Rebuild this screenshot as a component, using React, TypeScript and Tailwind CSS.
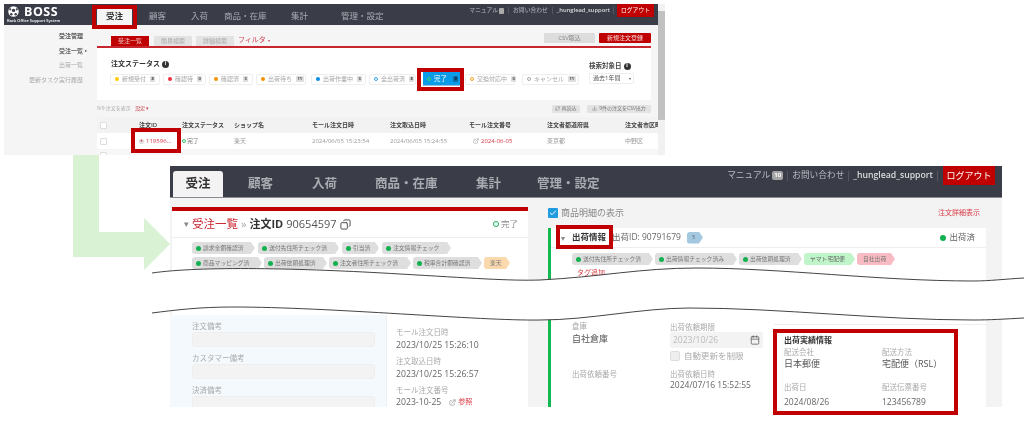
import { Calendar, Check, Copy, Download, ExternalLink, RefreshCw } from "lucide-react";

const RED = "bg-[#c00000]";

type Chip = { label: string; count: string; dot: string; w: string; ml: string };

const chips: Chip[] = [
  { label: "新規受付", count: "8", dot: "bg-[#ffc800]", w: "w-[50px]", ml: "ml-[13px]" },
  { label: "確認待", count: "0", dot: "bg-[#f0303c]", w: "w-[43px]", ml: "ml-[3px]" },
  { label: "確認済", count: "3", dot: "bg-[#f59300]", w: "w-[44px]", ml: "ml-[3px]" },
  { label: "出荷待ち", count: "11", dot: "bg-[#f59300]", w: "w-[50px]", ml: "ml-[3px]" },
  { label: "出荷作業中", count: "3", dot: "bg-[#0a8fe8]", w: "w-[55px]", ml: "ml-[5px]" },
  { label: "全出荷済", count: "8", dot: "border border-[#35a5ea] bg-white", w: "w-[47px]", ml: "ml-[3px]" },
];

const chipsAfter: Chip[] = [
  { label: "交換対応中", count: "0", dot: "border border-[#f5a623] bg-white", w: "w-[50px]", ml: "ml-[5px]" },
  { label: "キャンセル", count: "11", dot: "border border-[#aaa] bg-white", w: "w-[57px]", ml: "ml-[7px]" },
];

const topCols = [
  { label: "注文ステータス", w: "w-[52px]" },
  { label: "ショップ名", w: "w-[78px]" },
  { label: "モール注文日時", w: "w-[78px]" },
  { label: "注文取込日時", w: "w-[79px]" },
  { label: "モール注文番号", w: "w-[78px]" },
  { label: "注文者都道府県", w: "w-[78px]" },
  { label: "注文者市区町", w: "w-[33px]" },
];

function StatusChip({ chip }: { chip: Chip }) {
  return (
    <div className={`flex h-[11px] items-center gap-[3px] rounded-[2px] border border-[#eeeeee] bg-white pl-[4px] text-[6px] text-[#a5a5a5] ${chip.w} ${chip.ml}`}>
      <span className={`h-[4px] w-[4px] shrink-0 rounded-full ${chip.dot}`} />
      <span className="whitespace-nowrap">{chip.label}</span>
      <span className="ml-[1px] rounded-[1px] bg-[#ddd] px-[1.5px] text-[4px] font-bold text-[#444]">{chip.count}</span>
    </div>
  );
}

function BossLogo() {
  return (
    <svg viewBox="0 0 20 20" className="h-[11px] w-[11px]">
      <circle cx="10" cy="10" r="9.5" fill="#fff" />
      <circle cx="10" cy="8" r="3" fill="#3a3c48" />
      <circle cx="4" cy="6" r="2" fill="#3a3c48" />
      <circle cx="16" cy="6" r="2" fill="#3a3c48" />
      <circle cx="6" cy="15" r="2.2" fill="#3a3c48" />
      <circle cx="14" cy="15" r="2.2" fill="#3a3c48" />
    </svg>
  );
}

function TopHeader() {
  return (
    <div className="relative flex h-[21px] items-end bg-[#3a3c48]">
      <div className="flex w-[93px] flex-col pl-[3px] text-white">
        <div className="flex h-[15px] items-center gap-[5px] pl-[1px]">
          <BossLogo />
          <span className="text-[12.5px] leading-[15px] font-bold tracking-[0.5px]">BOSS</span>
        </div>
        <span className="h-[6px] text-[4px] leading-[4px] font-semibold whitespace-nowrap">Back Office Support System</span>
      </div>
      <div className="flex h-[17px] w-[35px] items-center justify-center rounded-t-[2px] bg-[#f5f5f5] text-[8.5px] font-bold text-[#333]">受注</div>
      <div className="flex h-[17px] items-center text-[8.5px] text-[#a9abb1]">
        <span className="ml-[17px] w-[27px]">顧客</span>
        <span className="ml-[15px] w-[27px]">入荷</span>
        <span className="ml-[6px] w-[43px]">商品・在庫</span>
        <span className="ml-[24px] w-[20px]">集計</span>
        <span className="ml-[30px] whitespace-nowrap">管理・設定</span>
      </div>
      <div className="absolute top-0 right-[4px] flex h-[13px] items-center text-[5.8px] text-[#b9bbc0]">
        <span>マニュアル</span>
        <span className="ml-[1px] h-[6px] w-[5px] rounded-[1px] bg-[#aaa]" />
        <span className="mx-[4px] h-[7px] border-l border-[#55575f]" />
        <span>お問い合わせ</span>
        <span className="mx-[4px] h-[7px] border-l border-[#55575f]" />
        <span className="font-semibold text-[#ddd]">_hunglead_support</span>
        <span className="mx-[3px] h-[7px] border-l border-[#55575f]" />
        <span className={`flex h-[13px] w-[37px] items-center justify-center text-white ${RED}`}>ログアウト</span>
      </div>
    </div>
  );
}

function TopSidebar() {
  return (
    <div className="flex w-[93px] flex-col items-end pt-[4px] pr-[14px] text-[6px] leading-[14.6px] text-[#aaa]">
      <span className="font-bold text-[#555]">受注管理</span>
      <span className="font-semibold text-[#666]">受注一覧<span className="absolute ml-[2px] text-[4px]">▸</span></span>
      <span>出荷一覧</span>
      <span className="whitespace-nowrap">更新タスク実行履歴</span>
    </div>
  );
}

function TopMain() {
  return (
    <div className="w-[561px]">
      <div className="flex h-[21px] w-[554px] items-end pl-[14px] text-[6px]">
        <span className={`flex h-[10px] w-[38px] items-center justify-center text-[#f0c0c0] ${RED}`}>受注一覧</span>
        <span className="ml-[5px] flex h-[10px] w-[38px] items-center justify-center bg-[#e3e3e3] text-[#aaa]">簡易検索</span>
        <span className="ml-[4px] flex h-[10px] w-[38px] items-center justify-center bg-[#e3e3e3] text-[#aaa]">詳細検索</span>
        <span className="ml-[4px] text-[7px] leading-[10px] text-[#d04050]">フィルタ <span className="text-[4px]">▾</span></span>
        <span className="mb-[3px] ml-auto flex h-[10px] w-[51px] items-center justify-center rounded-[1px] bg-[#ddd] text-[#888]">CSV取込</span>
        <span className={`mb-[3px] ml-[4px] flex h-[10px] w-[52px] items-center justify-center rounded-[1px] text-[#f5d5d5] ${RED}`}>新規注文登録</span>
      </div>
      <div className="h-[54px] w-[554px] border-t-2 border-[#c8262e] bg-white">
        <div className="flex">
          <div>
            <div className="mt-[11px] ml-[14px] flex h-[10px] items-center gap-[2px] text-[7px] font-bold text-[#333]">
              注文ステータス
              <span className="flex h-[7px] w-[7px] items-center justify-center rounded-full bg-[#333] text-[5px] text-white">i</span>
            </div>
            <div className="mt-[3px] flex items-center">
              {chips.map((chip) => (
                <StatusChip key={chip.label} chip={chip} />
              ))}
              <div className="ml-[7px] flex h-[14px] w-[37px] items-center gap-[3px] border-b border-[#9bd] bg-[#0a9be9] pl-[4px] text-[6.5px] text-white">
                <span className="h-[4px] w-[4px] rounded-full border border-[#3dcf70]" />
                完了
                <span className="ml-[3px] rounded-[1px] bg-[#0a6ea8] px-[1.5px] text-[4px] font-bold text-[#111]">9</span>
              </div>
              {chipsAfter.map((chip) => (
                <StatusChip key={chip.label} chip={chip} />
              ))}
            </div>
          </div>
          <div className="mt-[13px] ml-[10px]">
            <div className="flex h-[10px] items-center gap-[2px] text-[6.5px] font-bold whitespace-nowrap text-[#444]">
              検索対象日
              <span className="flex h-[7px] w-[7px] items-center justify-center rounded-full bg-[#333] text-[5px] text-white">i</span>
            </div>
            <div className="mt-[2px] flex h-[11px] w-[45px] items-center justify-between rounded-[1px] border border-[#eee] pr-[2px] pl-[3px] text-[6px] text-[#555]">
              過去1年間 <span className="text-[4px]">▾</span>
            </div>
          </div>
        </div>
      </div>
      <div className="flex h-[17px] w-[554px] items-center justify-between text-[5px] text-[#aaa]">
        <span>9/9 注文を表示 <span className="ml-[3px] text-[#c8404a]">設定 ▾</span></span>
        <div className="flex items-center gap-[7px]">
          <span className="flex h-[8px] w-[28px] items-center justify-center gap-[1px] rounded-[1px] bg-[#e3e3e3] text-[#777]">
            <RefreshCw size={5} /> 再読込
          </span>
          <span className="flex h-[8px] w-[64px] items-center justify-center gap-[2px] rounded-[1px] bg-[#e3e3e3] text-[#777]">
            <Download size={5} /> 9件の注文をCSV出力
          </span>
        </div>
      </div>
      <div className="flex h-[16px] items-center bg-[#f2f2f2] text-[6px] font-semibold whitespace-nowrap text-[#444]">
        <span className="ml-[3px] h-[7px] w-[7px] rounded-[1px] border border-[#ddd] bg-white" />
        <span className="ml-[32px] w-[43px]">注文ID</span>
        {topCols.map((col) => (
          <span key={col.label} className={col.w}>{col.label}</span>
        ))}
      </div>
      <div className="flex h-[16px] items-center bg-white text-[6px] whitespace-nowrap text-[#999]">
        <span className="ml-[3px] h-[7px] w-[7px] rounded-[1px] border border-[#ddd] bg-white" />
        <span className="ml-[32px] flex w-[43px] items-center gap-[2px] text-[#d83a44]">
          <span className="flex h-[5px] w-[5px] items-center justify-center rounded-full bg-[#ddd] text-[5px] leading-none font-bold">+</span>
          119596...
        </span>
        <span className="flex w-[52px] items-center gap-[1px] text-[#777]">
          <span className="h-[4px] w-[4px] rounded-full border border-[#3dbf70]" />完了
        </span>
        <span className="w-[78px]">楽天</span>
        <span className="w-[78px]">2024/06/05 15:23:54</span>
        <span className="w-[79px]">2024/06/05 15:24:55</span>
        <span className="flex w-[78px] items-center gap-[2px] pl-[4px] text-[#d83a44]">
          <ExternalLink size={6} className="text-[#999]" />2024-06-05
        </span>
        <span className="w-[78px]">東京都</span>
        <span className="w-[33px]">中野区</span>
      </div>
      <div className="mt-[1px] flex h-[5px] items-start overflow-hidden bg-[#f7f7f7]">
        <span className="mt-[2px] ml-[3px] h-[7px] w-[7px] rounded-[1px] border border-[#ddd] bg-white" />
      </div>
    </div>
  );
}

function TopShot() {
  return (
    <div className="absolute top-[4px] left-[4px] flex h-[151px] w-[661px] overflow-hidden bg-[#f5f5f5] blur-[0.4px]">
      <div className="w-[654px]">
        <TopHeader />
        <div className="flex">
          <TopSidebar />
          <TopMain />
        </div>
      </div>
      <div className="relative w-[7px] bg-[#f1f1f1]">
        <div className="mt-[7px] h-[109px] bg-[#c1c1c1]" />
      </div>
    </div>
  );
}

function Tag({ label, w, tone = "done" }: { label: string; w: string; tone?: "done" | "orange" | "green" | "pink" | "blue" }) {
  const tones = {
    done: "bg-[#dedede] text-[#777]",
    orange: "bg-[#fbd9ae] text-[#777] pl-[6px]",
    green: "bg-[#bff5c9] text-[#666] pl-[6px]",
    pink: "bg-[#f9bbc3] text-[#777] pl-[6px]",
    blue: "bg-[#a3c8df] text-[#667] pl-[5px]",
  };
  return (
    <span className={`flex h-[12px] shrink-0 items-center rounded-l-[3px] pl-[4px] text-[5.8px] whitespace-nowrap [clip-path:polygon(0_0,calc(100%-4px)_0,100%_50%,calc(100%-4px)_100%,0_100%)] ${tones[tone]} ${w}`}>
      {tone === "done" && <span className="mr-[2px] h-[5px] w-[5px] shrink-0 rounded-full bg-[#12b050]" />}
      {label}
    </span>
  );
}

function BottomHeader() {
  return (
    <div className="relative flex h-[32px] items-end border-b border-[#888a92] bg-[#3a3c48] pl-[3px]">
      <div className="flex h-[26px] w-[50px] items-center justify-center rounded-t-[3px] bg-[#f3f3f3] text-[12.5px] font-bold text-[#333]">受注</div>
      <div className="flex h-[26px] items-center text-[12.5px] font-semibold text-[#a9abb1]">
        <span className="ml-[25px] w-[25px]">顧客</span>
        <span className="ml-[39px] w-[25px]">入荷</span>
        <span className="ml-[38px] w-[63px]">商品・在庫</span>
        <span className="ml-[38px] w-[25px]">集計</span>
        <span className="ml-[36px] whitespace-nowrap">管理・設定</span>
      </div>
      <div className="absolute top-0 right-[7px] flex h-[19px] items-center text-[8.7px] text-[#b9bbc0]">
        <span>マニュアル</span>
        <span className="ml-[2px] rounded-[2px] bg-[#a5a5a5] px-[2px] text-[6px] leading-[9px] font-bold text-white">10</span>
        <span className="mx-[4px] h-[10px] border-l border-[#55575f]" />
        <span>お問い合わせ</span>
        <span className="mx-[4px] h-[10px] border-l border-[#55575f]" />
        <span className="font-semibold text-[#ddd]">_hunglead_support</span>
        <span className="mx-[4px] h-[10px] border-l border-[#55575f]" />
        <span className={`ml-[1px] flex h-[19px] w-[52px] items-center justify-center text-[9px] text-white ${RED}`}>ログアウト</span>
      </div>
    </div>
  );
}

function OrderColumn() {
  return (
    <div className="w-[378px] pt-[9px]">
      <div className="ml-[2px] h-[108px] w-[356px] border-t-4 border-[#c00000] bg-white">
        <div className="flex h-[27px] items-center border-b border-[#eeeeee] pr-[10px] pl-[12px] text-[11px] whitespace-nowrap">
          <span className="mr-[3px] w-[5px] text-[9px] text-[#888]">▾</span>
          <span className="text-[11.5px] text-[#c8262e]">受注一覧</span>
          <span className="mx-[3px] text-[#aaa]">»</span>
          <span className="font-bold text-[#333]">注文ID</span>
          <span className="ml-[3px] text-[#555]">90654597</span>
          <Copy size={11} className="ml-[3px] -scale-x-100 text-[#444]" />
          <span className="ml-auto flex items-center gap-[2px] text-[8.5px] text-[#888]">
            <span className="h-[6px] w-[6px] rounded-full border border-[#12b050]" />完了
          </span>
        </div>
        <div className="mt-[4px] flex gap-[3px] pl-[20px]">
          <Tag label="請求金額確認済" w="w-[63px]" />
          <Tag label="送付先住所チェック済" w="w-[81px]" />
          <Tag label="引当済" w="w-[37px]" />
          <Tag label="注文情報チェック" w="w-[69px]" />
        </div>
        <div className="mt-[3px] flex gap-[2px] pl-[20px]">
          <Tag label="商品マッピング済" w="w-[70px]" />
          <Tag label="出荷依頼処理済" w="w-[63px]" />
          <Tag label="注文者住所チェック済" w="w-[82px]" />
          <Tag label="税率合計額確認済" w="w-[69px]" />
          <Tag label="楽天" w="w-[26px]" tone="orange" />
        </div>
      </div>
      <div className="flex h-[93px] w-[358px]">
        <div className="w-[216px] bg-[#f4f9fd] pl-[22px] text-[7.5px] leading-[10px] text-[#aaa]">
          <div className="mt-[6px] h-[10px]">注文備考</div>
          <div className="mt-[1px] h-[15px] w-[183px] rounded-[3px] border border-[#eeeeee] bg-[#f3f3f3]" />
          <div className="mt-[6px] h-[10px]">カスタマー備考</div>
          <div className="mt-[1px] h-[15px] w-[183px] rounded-[3px] border border-[#eeeeee] bg-[#f3f3f3]" />
          <div className="mt-[6px] h-[10px]">決済備考</div>
          <div className="mt-[1px] h-[15px] w-[183px] rounded-[3px] border border-[#eeeeee] bg-[#f3f3f3]" />
        </div>
        <div className="flex-1 border-l border-[#eeeeee] bg-white pl-[9px] whitespace-nowrap">
          <div className="mt-[12px] text-[7.5px] leading-[10px] text-[#aaa]">モール注文日時</div>
          <div className="mt-[2px] text-[8.7px] leading-[12px] text-[#666]">2023/10/25 15:26:10</div>
          <div className="mt-[5px] text-[7.5px] leading-[10px] text-[#aaa]">注文取込日時</div>
          <div className="mt-[2px] text-[8.7px] leading-[12px] text-[#666]">2023/10/25 15:26:57</div>
          <div className="mt-[5px] text-[7.5px] leading-[10px] text-[#aaa]">モール注文番号</div>
          <div className="mt-[1px] flex items-center text-[8.7px] leading-[12px] text-[#666]">
            2023-10-25
            <ExternalLink size={7} className="mr-[2px] ml-[8px] text-[#888]" />
            <span className="text-[7px] text-[#d83a44]">参照</span>
          </div>
        </div>
      </div>
    </div>
  );
}

function ShippingResult() {
  return (
    <div className="mt-[4px] ml-[3px] w-[212px] flex-none border-t border-[#eeeeee] text-[7.5px] leading-[10px] text-[#aaa]">
      <div className="pt-[9px] pl-[10px]">
        <div className="text-[8px] leading-[11px] font-bold text-[#333]">出荷実績情報</div>
        <div className="grid grid-cols-[98px_1fr] whitespace-nowrap">
          <span className="mt-[2px]">配送会社</span>
          <span className="mt-[2px]">配送方法</span>
          <span className="mt-[1px] text-[9px] leading-[12px] text-[#555]">日本郵便</span>
          <span className="mt-[1px] text-[9px] leading-[12px] text-[#555]">宅配便（RSL）</span>
          <span className="mt-[12px]">出荷日</span>
          <span className="mt-[12px]">配送伝票番号</span>
          <span className="mt-[4px] text-[8.5px] leading-[12px] text-[#666]">2024/08/26</span>
          <span className="mt-[4px] text-[8.5px] leading-[12px] text-[#666]">123456789</span>
        </div>
      </div>
    </div>
  );
}

function ShippingColumn() {
  return (
    <div className="w-[454px] pr-[16px]">
      <div className="flex h-[30px] items-center justify-between pr-[6px] text-[9px] text-[#888]">
        <div className="flex items-center gap-[3px]">
          <span className="flex h-[10px] w-[10px] items-center justify-center rounded-[1px] bg-[#1f9be0]">
            <Check size={8} strokeWidth={3} className="text-white" />
          </span>
          商品明細の表示
        </div>
        <span className="text-[7px] text-[#d83a44]">注文詳細表示</span>
      </div>
      <div className="h-[179px] border-l-[3px] border-[#12b850] bg-white">
        <div className="flex h-[20px] items-center border-b border-[#eeeeee] pr-[11px] pl-[10px] text-[8.5px] whitespace-nowrap text-[#666]">
          <span className="mr-[6px] w-[5px] text-[8px] text-[#888]">▾</span>
          <span className="font-bold text-[#333]">出荷情報</span>
          <span className="ml-[6px]">出荷ID: 90791679</span>
          <span className="ml-[6px]"><Tag label="5" w="w-[16px]" tone="blue" /></span>
          <span className="ml-auto flex items-center gap-[3px]">
            <span className="h-[6px] w-[6px] rounded-full bg-[#12b050]" />出荷済
          </span>
        </div>
        <div className="mt-[5px] flex gap-[2px] pl-[21px]">
          <Tag label="送付先住所チェック済" w="w-[81px]" />
          <Tag label="出荷情報チェック済み" w="w-[82px]" />
          <Tag label="出荷依頼処理済" w="w-[63px]" />
          <Tag label="ヤマト宅配便" w="w-[51px]" tone="green" />
          <Tag label="自社出荷" w="w-[38px]" tone="pink" />
        </div>
        <div className="mt-[3px] ml-[26px] text-[7px] text-[#d83a44]">タグ追加</div>
        <div className="mt-[41px] flex">
          <div className="flex w-[220px] flex-none pl-[21px] whitespace-nowrap">
            <div className="w-[98px] text-[7.5px] leading-[10px] text-[#aaa]">
              <div className="mt-[1px]">倉庫</div>
              <div className="mt-[1px] text-[9px] leading-[14px] text-[#555]">自社倉庫</div>
              <div className="mt-[23px]">出荷依頼番号</div>
            </div>
            <div className="text-[7.5px] leading-[10px] text-[#aaa]">
              <div className="mt-[2px]">出荷依頼期限</div>
              <div className="flex h-[16px] w-[93px] items-center justify-between rounded-[2px] bg-[#f3f3f3] pr-[3px] pl-[3px] text-[8.5px] text-[#bbb]">
                2023/10/26
                <Calendar size={10} className="text-[#666]" />
              </div>
              <div className="mt-[3px] flex items-center gap-[4px] text-[8.5px]">
                <span className="h-[10px] w-[10px] rounded-[2px] border border-[#ddd] bg-[#eeeeee]" />
                自動更新を制限
              </div>
              <div className="mt-[8px]">出荷依頼日時</div>
              <div className="text-[8.5px] leading-[12px] text-[#666]">2024/07/16 15:52:55</div>
            </div>
          </div>
          <ShippingResult />
        </div>
      </div>
    </div>
  );
}

function BottomShot() {
  return (
    <div className="absolute top-[166px] left-[170px] h-[241px] w-[832px] overflow-hidden bg-[#f3f3f3] blur-[0.3px]">
      <BottomHeader />
      <div className="flex">
        <OrderColumn />
        <ShippingColumn />
      </div>
    </div>
  );
}

function Arrow() {
  return (
    <svg className="absolute top-0 left-0" width="1024" height="427">
      <polygon points="73,155 99,155 99,232 144,232 144,218 170,244 144,270 144,257 73,257" fill="#d8f2d3" />
    </svg>
  );
}

function TornBand() {
  return (
    <svg className="absolute top-0 left-0" width="1024" height="427" fill="none">
      <path
        d="M152,273 C200,266 300,268 400,274 C470,278 510,281 540,280 C600,277 640,268 697,268 C780,268 880,281 973,281 C990,281 1005,279 1024,278 L1024,318 C1005,319 990,320 973,320 C880,320 780,308 690,308 C640,308 590,320 540,320 C480,321 330,307 233,307 C200,307 175,310 152,313 Z"
        fill="#fff"
      />
      <path d="M152,273 C200,266 300,268 400,274 C470,278 510,281 540,280 C600,277 640,268 697,268 C780,268 880,281 973,281 C990,281 1005,279 1024,278" stroke="#444" strokeWidth="1" />
      <path d="M152,313 C175,310 200,307 233,307 C330,307 480,321 540,320 C590,320 640,308 690,308 C780,308 880,320 973,320 C990,320 1005,319 1024,318" stroke="#444" strokeWidth="1" />
    </svg>
  );
}

function Callout({ box }: { box: string }) {
  return <div className={`absolute border-4 border-[#c00000] ${box}`} />;
}

export default function App() {
  return (
    <div className="relative h-[427px] w-[1024px] overflow-hidden bg-white font-['Open_Sans','Noto_Sans_CJK_JP',sans-serif]">
      <TopShot />
      <Arrow />
      <BottomShot />
      <TornBand />
      <Callout box="left-[92px] top-[5px] h-[24px] w-[45px]" />
      <Callout box="left-[417px] top-[68px] h-[23px] w-[47px]" />
      <Callout box="left-[131px] top-[128px] h-[25px] w-[50px]" />
      <Callout box="left-[556px] top-[225px] h-[24px] w-[57px]" />
      <Callout box="left-[773px] top-[329px] h-[86px] w-[185px]" />
    </div>
  );
}
